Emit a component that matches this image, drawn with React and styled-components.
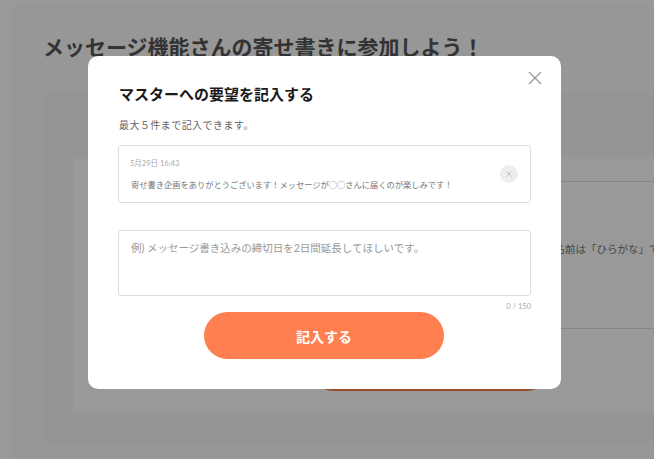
import React from "react";
import styled, { createGlobalStyle } from "styled-components";

const Global = createGlobalStyle`
  html, body { margin: 0; padding: 0; height: 100%; overflow: hidden; background: #fff; }
  body { font-family: Lato, "Noto Sans CJK JP", sans-serif; color: #333; }
  * { box-sizing: border-box; }
`;

const Page = styled.div`
  height: 459px;
  overflow: hidden;
  padding: 5px 0 0 13px;
  background: #ffffff;
`;
const Sheet = styled.div`
  width: 700px;
  height: 500px;
  padding: 28px 0 0 31px;
  background: #fcfcfc;
`;
const PageTitle = styled.h1`
  margin: 0 0 31px -1px;
  font-size: 21px;
  line-height: 28px;
  font-weight: 700;
  color: #555;
`;
const Panel = styled.div`
  width: 700px;
  height: 352px;
  padding: 66px 0 0 29px;
  background: #f8f8f8;
  border-radius: 6px;
`;
const FormCard = styled.div`
  width: 620px;
  height: 255px;
  background: #ffffff;
  padding-top: 23px;
`;
const FormRow = styled.div`
  margin-left: 60px;
  height: 147px;
  padding-top: 58px;
  border-top: 1px solid #ddd;
  font-size: 10.5px;
  line-height: 18px;
  color: #777;
  white-space: nowrap;
`;
const RowLabel = styled.span`
  display: block;
  padding-left: 411px;
`;
const ButtonRow = styled.div`
  margin-left: 60px;
  padding: 15px 0 0 177px;
  border-top: 1px solid #ddd;
`;
const BackButton = styled.div`
  width: 240px;
  height: 47px;
  background: #ff7f50;
  border-radius: 24px;
`;

const Overlay = styled.div`
  position: fixed;
  inset: 0;
  background: rgba(0, 0, 0, 0.4);
`;
const Modal = styled.div`
  position: absolute;
  left: 88px;
  top: 56px;
  width: 473px;
  height: 333px;
  padding: 30px 30px 0;
  background: #fff;
  border-radius: 10px;
`;
const CloseButton = styled.button`
  position: absolute;
  top: 15px;
  right: 19px;
  width: 14px;
  height: 14px;
  padding: 0;
  border: 0;
  background: none;
  display: block;
  svg { display: block; }
`;
const ModalTitle = styled.h2`
  margin: 0;
  padding-left: 1px;
  font-size: 15px;
  line-height: 17px;
  font-weight: 700;
  color: #1a1a1a;
`;
const Lead = styled.p`
  margin: 15px 0 0;
  padding-left: 1px;
  font-size: 10px;
  letter-spacing: 0.45px;
  line-height: 14px;
  color: #666;
`;
const EntryCard = styled.div`
  position: relative;
  height: 58px;
  margin-top: 13px;
  padding: 12px 11px 0;
  border: 1px solid #ddd;
  border-radius: 3px;
`;
const EntryDate = styled.div`
  font-size: 7.5px;
  line-height: 11px;
  color: #aaa;
`;
const EntryText = styled.div`
  margin-top: 10px;
  padding-left: 1px;
  font-size: 8.25px;
  line-height: 12px;
  color: #777;
  white-space: nowrap;
`;
const DeleteButton = styled.button`
  position: absolute;
  top: 19px;
  right: 12px;
  width: 18px;
  height: 18px;
  padding: 0;
  border: 0;
  border-radius: 50%;
  background: #eee;
  display: flex;
  align-items: center;
  justify-content: center;
`;
const TextBox = styled.div`
  height: 66px;
  margin-top: 27px;
  padding: 9px 12px;
  border: 1px solid #ddd;
  border-radius: 3px;
  font-size: 10.5px;
  line-height: 16px;
  color: #999;
  white-space: nowrap;
`;
const Counter = styled.div`
  margin-top: 5px;
  text-align: right;
  font-size: 7.5px;
  line-height: 11px;
  color: #aaa;
`;
const Submit = styled.button`
  display: block;
  width: 240px;
  height: 47px;
  margin-left: 86px;
  border: 0;
  border-radius: 24px;
  background: #ff7f50;
  color: #fff;
  font-family: inherit;
  font-size: 14px;
  font-weight: 700;
`;

const Cross = ({ size, color, width }) => (
  <svg width={size} height={size} viewBox="0 0 14 14" fill="none" stroke={color} strokeWidth={width}>
    <path d="M1 1L13 13M13 1L1 13" />
  </svg>
);

export default function App() {
  return (
    <>
      <Global />
      <Page>
        <Sheet>
          <PageTitle>メッセージ機能さんの寄せ書きに参加しよう！</PageTitle>
          <Panel>
            <FormCard>
              <FormRow>
                <RowLabel>お名前は「ひらがな」で</RowLabel>
              </FormRow>
              <ButtonRow>
                <BackButton />
              </ButtonRow>
            </FormCard>
          </Panel>
        </Sheet>
      </Page>
      <Overlay>
        <Modal>
          <CloseButton aria-label="閉じる">
            <Cross size={14} color="#999" width={1.3} />
          </CloseButton>
          <ModalTitle>マスターへの要望を記入する</ModalTitle>
          <Lead>最大５件まで記入できます。</Lead>
          <EntryCard>
            <EntryDate>5月29日 16:43</EntryDate>
            <EntryText>寄せ書き企画をありがとうございます！メッセージが◯◯さんに届くのが楽しみです！</EntryText>
            <DeleteButton aria-label="削除">
              <Cross size={6} color="#aaa" width={1.6} />
            </DeleteButton>
          </EntryCard>
          <TextBox>例) メッセージ書き込みの締切日を2日間延長してほしいです。</TextBox>
          <Counter>0 / 150</Counter>
          <Submit>記入する</Submit>
        </Modal>
      </Overlay>
    </>
  );
}
